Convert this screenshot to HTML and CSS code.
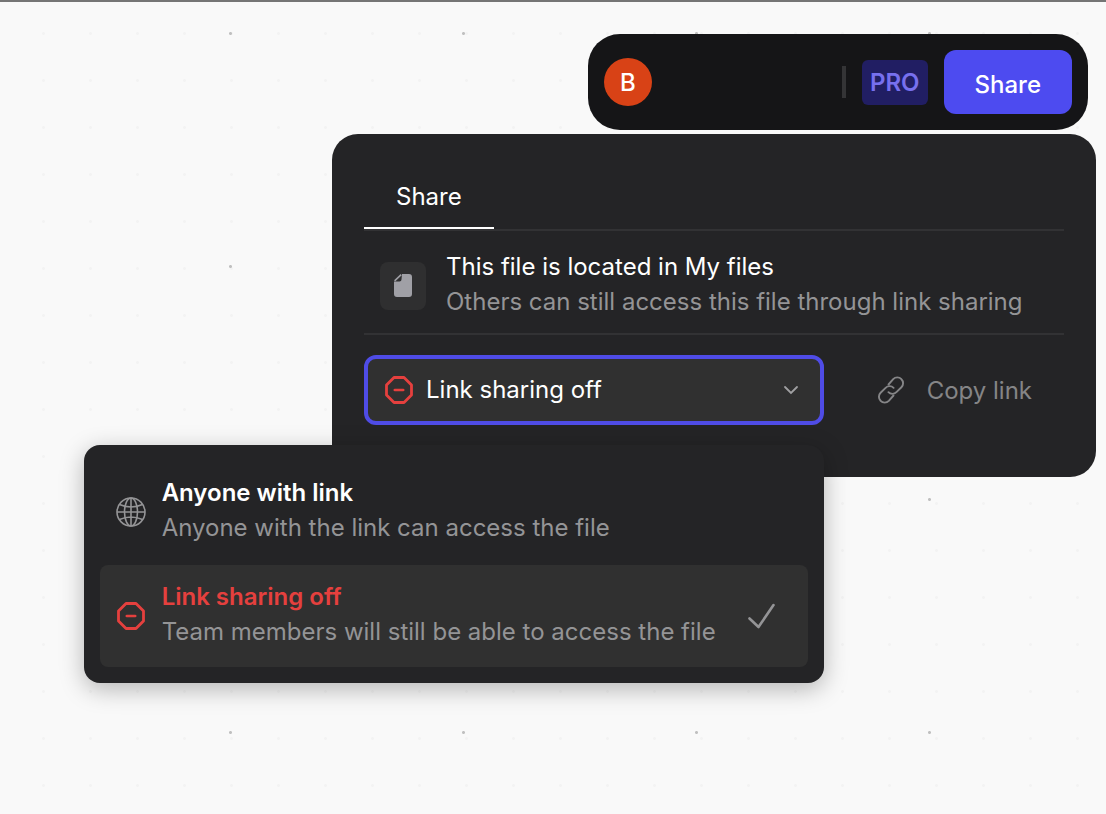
FILE: index.html
```html
<!DOCTYPE html>
<html lang="en">
<head>
<meta charset="utf-8">
<meta name="viewport" content="width=device-width, initial-scale=1">
<title>Share file</title>
<link rel="stylesheet" href="styles.css">
</head>
<body>
<svg class="symbols" aria-hidden="true">
  <symbol id="octagon" viewBox="0 0 30 30">
    <path d="M10 2.500h10l7.500 7.500v10l-7.500 7.500H10L2.500 20V10z" fill="none" stroke="currentColor" stroke-width="2.800" stroke-linejoin="round"/>
    <path d="M10.800 15h8.400" stroke="currentColor" stroke-width="2.600" stroke-linecap="round"/>
  </symbol>
</svg>
<main class="canvas">
  <header class="toolbar">
    <span class="avatar">B</span>
    <span class="separator"></span>
    <span class="plan">PRO</span>
    <button class="share-button" type="button">Share</button>
  </header>
  <section class="panel" aria-label="Share">
    <div class="tabs" role="tablist">
      <button class="tab" type="button" role="tab" aria-selected="true">Share</button>
    </div>
    <div class="location">
      <span class="file-tile">
        <svg class="file-icon" viewBox="0 0 18 24" aria-hidden="true"><path d="M8 0h7a3 3 0 0 1 3 3v17a3 3 0 0 1-3 3H3a3 3 0 0 1-3-3V7.500h5.500A2 2 0 0 0 7.500 5.500z" fill="#a0a0a6"/><path d="M.6 6.800 7.200.6" stroke="#a0a0a6" stroke-width="1.600"/></svg>
      </span>
      <div class="copy">
        <p class="title">This file is located in My files</p>
        <p class="detail">Others can still access this file through link sharing</p>
      </div>
    </div>
    <div class="actions">
      <div class="access">
        <svg class="icon danger" aria-hidden="true"><use href="#octagon"/></svg>
        <select class="access-select" aria-label="Link access">
          <option>Link sharing off</option>
          <option>Anyone with link</option>
        </select>
        <svg class="chevron" viewBox="0 0 16 10" aria-hidden="true"><path d="m2 2 6 6 6-6" fill="none" stroke="currentColor" stroke-width="1.800" stroke-linecap="round"/></svg>
        <div class="menu">
          <button class="menu-item" type="button">
            <svg class="icon" viewBox="0 0 30 30" aria-hidden="true"><g fill="none" stroke="currentColor" stroke-width="1.600"><circle cx="15" cy="15" r="14"/><ellipse cx="15" cy="15" rx="6.500" ry="14"/><path d="M15 1v28M1 15h28M3.500 7.500q11.500 5 23 0M3.500 22.500q11.500-5 23 0"/></g></svg>
            <span class="copy">
              <span class="title strong">Anyone with link</span>
              <span class="detail">Anyone with the link can access the file</span>
            </span>
          </button>
          <button class="menu-item selected" type="button">
            <svg class="icon danger" aria-hidden="true"><use href="#octagon"/></svg>
            <span class="copy">
              <span class="title strong danger">Link sharing off</span>
              <span class="detail">Team members will still be able to access the file</span>
            </span>
            <svg class="check" viewBox="0 0 28 28" aria-hidden="true"><path d="m2.500 16.500 9 8.500L26.500 3" fill="none" stroke="currentColor" stroke-width="2.600" stroke-linecap="round" stroke-linejoin="round"/></svg>
          </button>
        </div>
      </div>
      <button class="copy-link" type="button">
        <svg class="link-icon" viewBox="0 0 28 28" aria-hidden="true"><g fill="none" stroke="currentColor" stroke-width="1.900" stroke-linecap="round"><path d="M11.500 8.500 16.200 3.200a5.600 5.600 0 0 1 8.200 0 5.600 5.600 0 0 1 0 8l-5 5a5.600 5.600 0 0 1-8 0"/><path d="M16.500 19.500 11.800 24.800a5.600 5.600 0 0 1-8.200 0 5.600 5.600 0 0 1 0-8l5-5a5.600 5.600 0 0 1 8 0"/></g></svg>
        Copy link
      </button>
    </div>
  </section>
</main>
</body>
</html>
```
FILE: styles.css
```css
* {
  box-sizing: border-box;
}

body {
  margin: 0;
  font: 400 24px/35px Inter, "Liberation Sans", sans-serif;
  color: #fff;
  background: #f9f9f9;
}

button,
select {
  border: 0;
  padding: 0;
  font: inherit;
  color: inherit;
  background: none;
}

p {
  margin: 0;
}

.symbols {
  display: none;
}

.canvas {
  display: flex;
  flex-direction: column;
  align-items: flex-end;
  gap: 4px;
  min-height: 100vh;
  padding: 32px 10px 32px 32px;
  border-top: 2px solid #757575;
  background-image:
    radial-gradient(circle, #c0c0c0 1px, transparent 2px),
    radial-gradient(circle, #f3f3f3 1px, transparent 2px);
  background-size: 233px 233px, 47px 47px;
  background-position: 114px -85px, 20px 8px;
}

.toolbar {
  display: flex;
  align-items: center;
  gap: 16px;
  width: 500px;
  max-width: 100%;
  margin-right: 8px;
  padding: 16px;
  border-radius: 32px;
  background: #151517;
}

.avatar {
  width: 48px;
  height: 48px;
  border-radius: 50%;
  font-weight: 500;
  line-height: 50px;
  text-align: center;
  background: #d84216;
}

.separator {
  width: 4px;
  height: 32px;
  margin-left: auto;
  background: #343436;
}

.plan {
  padding: 0 8px;
  border-radius: 6px;
  font-weight: 600;
  line-height: 45px;
  color: #7770ee;
  background: #211e63;
}

.share-button {
  height: 64px;
  padding: 4px 31px 0;
  border-radius: 12px;
  font-weight: 500;
  background: #4d4bf0;
}

.panel {
  width: 764px;
  max-width: 100%;
  padding: 32px 32px 52px;
  border-radius: 26px;
  background: #242426;
}

.tabs {
  border-bottom: 2px solid #323234;
}

.tab {
  display: block;
  padding: 13px 32px;
  border-bottom: 2px solid #fff;
}

.location {
  display: flex;
  align-items: center;
  gap: 20px;
  padding: 18px 16px 10px;
  border-bottom: 2px solid #323234;
}

.file-tile {
  display: grid;
  place-items: center;
  width: 46px;
  height: 48px;
  border-radius: 8px;
  background: #2f2f30;
}

.file-icon {
  width: 18px;
  height: 24px;
}

.copy {
  flex: 1;
  padding-bottom: 4px;
}

.title,
.detail {
  display: block;
}

.detail {
  color: #949496;
}

.strong {
  font-weight: 600;
}

.danger {
  color: #e5403e;
}

.actions {
  display: flex;
  margin-top: 20px;
}

.access {
  position: relative;
  display: flex;
  flex: 1;
  align-items: center;
  gap: 12px;
  height: 70px;
  padding: 0 21px 0 16px;
  border: 4px solid #4f4ce6;
  border-radius: 12px;
  background: #303030;
}

.access-select {
  flex: 1;
  min-width: 0;
  padding-bottom: 2px;
  appearance: none;
  outline: 0;
}

.icon {
  flex: none;
  width: 30px;
  height: 30px;
}

.chevron {
  width: 16px;
  height: 10px;
  color: #a0a0a2;
}

.copy-link {
  display: flex;
  align-items: center;
  gap: 22px;
  padding: 0 32px 0 53px;
  color: #858587;
}

.link-icon {
  width: 28px;
  height: 28px;
}

.menu {
  position: absolute;
  top: calc(100% + 24px);
  right: -4px;
  display: grid;
  gap: 2px;
  width: 740px;
  padding: 16px;
  border-radius: 16px;
  background: #242426;
  box-shadow: 0 6px 24px rgba(0, 0, 0, 0.28);
}

.menu-item {
  display: flex;
  align-items: center;
  gap: 16px;
  padding: 14px 33px 14px 16px;
  border-radius: 8px;
  text-align: left;
  color: #949496;
}

.menu-item .strong:not(.danger) {
  color: #fff;
}

.selected {
  background: #303030;
}

.check {
  width: 28px;
  height: 28px;
}
```
